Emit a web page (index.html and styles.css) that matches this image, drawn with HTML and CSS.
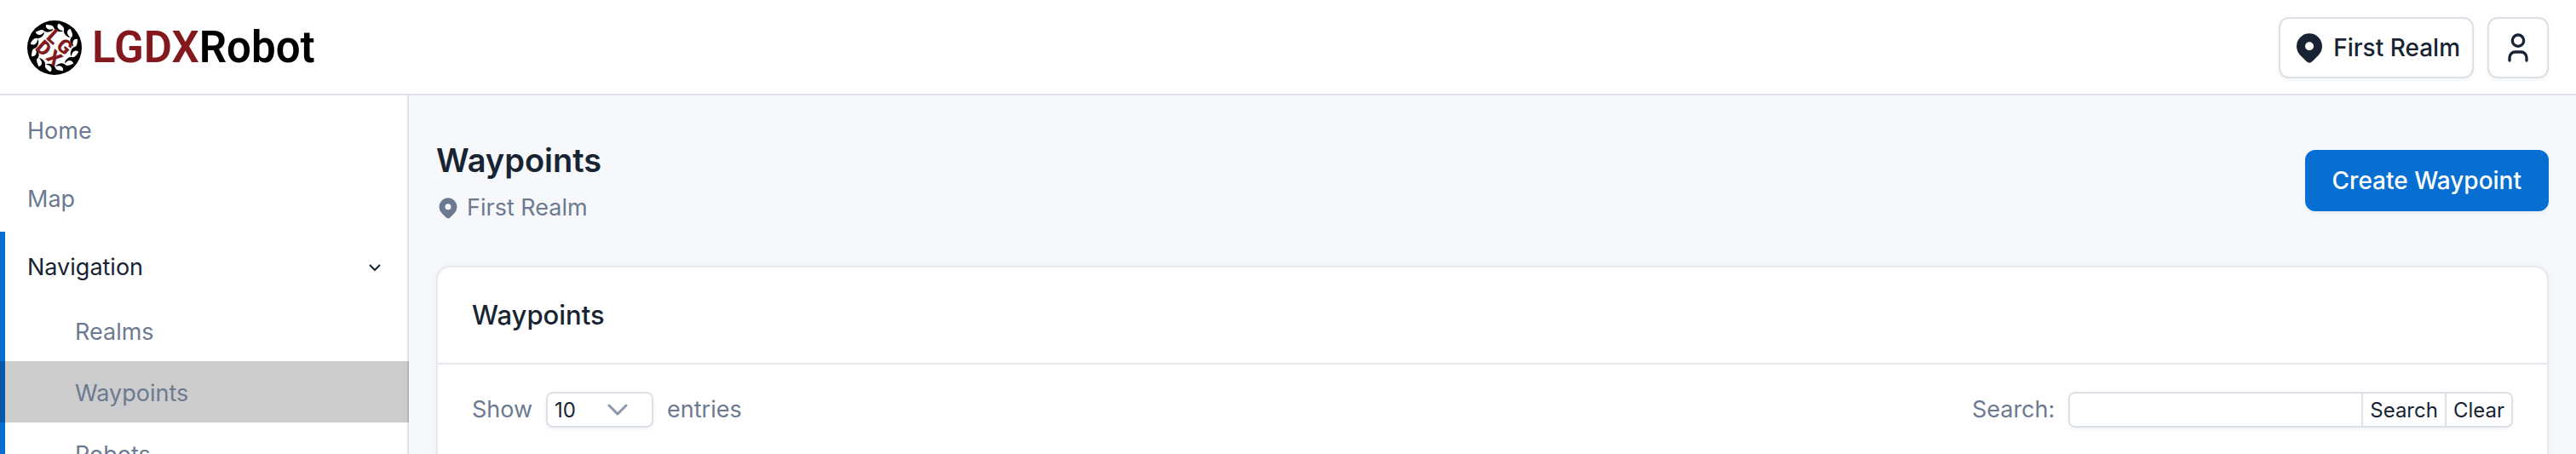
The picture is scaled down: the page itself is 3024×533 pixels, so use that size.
FILE: index.html
```html
<!DOCTYPE html>
<html lang="en">
<head>
  <meta charset="UTF-8">
  <meta name="viewport" content="width=device-width, initial-scale=1.0">
  <title>Waypoints - LGDXRobot</title>
  <link rel="stylesheet" href="styles.css">
</head>
<body>
  <!-- Shared icons -->
  <svg class="sprite" aria-hidden="true">
    <symbol id="icon-pin" viewBox="0 0 24 24">
      <path fill="currentColor" d="M18.364 4.636a9 9 0 0 1 .203 12.519l-.203 .21l-4.243 4.242a3 3 0 0 1 -4.097 .135l-.144 -.135l-4.244 -4.243a9 9 0 0 1 12.728 -12.728zm-6.364 3.364a3 3 0 1 0 0 6a3 3 0 0 0 0 -6z"/>
    </symbol>
    <symbol id="icon-user" viewBox="0 0 24 24">
      <path fill="none" stroke="currentColor" stroke-width="2" stroke-linecap="round" stroke-linejoin="round" d="M8 7a4 4 0 1 0 8 0a4 4 0 0 0 -8 0M6 21v-2a4 4 0 0 1 4 -4h4a4 4 0 0 1 4 4v2"/>
    </symbol>
  </svg>

  <header class="navbar">
    <a class="brand" href="#">
      <svg class="brand-logo" viewBox="0 0 64 64" aria-hidden="true">
        <defs>
          <path id="blade" d="M22 3Q32 -1 39 2Q34 5 36 9Q38 12 42 12Q40 14 37 13Q32 12 31 8Q30 5 22 5Z"/>
        </defs>
        <circle cx="32" cy="32" r="32"/>
        <circle cx="32" cy="32" r="30" fill="#fff"/>
        <use href="#blade"/>
        <use href="#blade" transform="rotate(30 32 32)"/>
        <use href="#blade" transform="rotate(60 32 32)"/>
        <use href="#blade" transform="rotate(90 32 32)"/>
        <use href="#blade" transform="rotate(120 32 32)"/>
        <use href="#blade" transform="rotate(150 32 32)"/>
        <use href="#blade" transform="rotate(180 32 32)"/>
        <use href="#blade" transform="rotate(210 32 32)"/>
        <use href="#blade" transform="rotate(240 32 32)"/>
        <use href="#blade" transform="rotate(270 32 32)"/>
        <use href="#blade" transform="rotate(300 32 32)"/>
        <use href="#blade" transform="rotate(330 32 32)"/>
        <g class="brand-letters" transform="rotate(42 32 32)">
          <text x="23" y="31">L</text>
          <text x="40" y="31">G</text>
          <text x="23" y="49">D</text>
          <text x="40" y="49">X</text>
        </g>
      </svg>
      <span class="brand-name"><span class="brand-red">LGDX</span>Robot</span>
    </a>
    <div class="navbar-actions">
      <button class="btn btn-realm" type="button">
        <svg class="icon"><use href="#icon-pin"/></svg>
        First Realm
      </button>
      <button class="btn btn-icon" type="button" aria-label="User">
        <svg class="icon"><use href="#icon-user"/></svg>
      </button>
    </div>
  </header>

  <div class="page">
    <nav class="sidebar">
      <a class="nav-link" href="#">Home</a>
      <a class="nav-link" href="#">Map</a>
      <div class="nav-group">
        <a class="nav-link active" href="#">
          Navigation
          <svg class="chevron" viewBox="0 0 16 10" aria-hidden="true"><path d="M2 2l6 6l6 -6"/></svg>
        </a>
        <a class="nav-sub" href="#">Realms</a>
        <a class="nav-sub current" href="#">Waypoints</a>
        <a class="nav-sub" href="#">Robots</a>
      </div>
    </nav>

    <main class="content">
      <div class="page-header">
        <div>
          <h1>Waypoints</h1>
          <div class="subtitle">
            <svg class="icon-small"><use href="#icon-pin"/></svg>
            First Realm
          </div>
        </div>
        <button class="btn btn-primary" type="button">Create Waypoint</button>
      </div>

      <section class="card">
        <div class="card-header">
          <h2>Waypoints</h2>
        </div>
        <div class="card-body">
          <div class="entries">
            <label for="pageSize">Show</label>
            <div class="select-wrap">
              <select id="pageSize">
                <option>10</option>
                <option>25</option>
                <option>50</option>
              </select>
              <svg class="select-arrow" viewBox="0 0 24 14" aria-hidden="true"><path d="M2 2l10 10l10 -10"/></svg>
            </div>
            <span>entries</span>
          </div>
          <form class="search">
            <label for="searchInput">Search:</label>
            <div class="input-group">
              <input type="text" id="searchInput">
              <button type="button">Search</button>
              <button type="button">Clear</button>
            </div>
          </form>
        </div>
      </section>
    </main>
  </div>
</body>
</html>
```
FILE: styles.css
```css
* {
  box-sizing: border-box;
}
body {
  margin: 0;
  height: 100vh;
  display: flex;
  flex-direction: column;
  overflow: hidden;
  font-family: Inter, "Liberation Sans", sans-serif;
  font-size: 27px;
  line-height: 40px;
  color: #182433;
  background-color: #f6f8fb;
}
h1, h2 {
  margin: 0;
}
a {
  color: inherit;
  text-decoration: none;
}
button, input, select {
  font-family: inherit;
  color: inherit;
}
.sprite {
  display: none;
}

/* Top bar */
.navbar {
  display: flex;
  flex-shrink: 0;
  align-items: center;
  justify-content: space-between;
  padding: 20px 32px 18px;
  background-color: #fff;
  border-bottom: 2px solid #dce1e7;
}
.brand {
  display: flex;
  align-items: center;
  gap: 12px;
}
.brand-logo {
  width: 64px;
  height: 64px;
}
.brand-letters {
  fill: #83181d;
  font-family: Roboto, sans-serif;
  font-size: 23px;
  font-weight: 900;
  text-anchor: middle;
}
.brand-name {
  font-family: Roboto, sans-serif;
  font-size: 51px;
  font-weight: 600;
  color: #000;
}
.brand-red {
  color: #83181d;
}
.navbar-actions {
  display: flex;
  gap: 16px;
}
.btn {
  display: flex;
  align-items: center;
  justify-content: center;
  height: 72px;
  border: 2px solid #dce1e7;
  border-radius: 12px;
  background-color: #fff;
  font-size: 28px;
  font-weight: 500;
  cursor: pointer;
  box-shadow: 0 2px 4px rgba(24, 36, 51, 0.06);
}
.btn-realm {
  gap: 8px;
  padding: 0 14px;
}
.btn-icon {
  width: 72px;
  padding: 0;
}
.btn-primary {
  padding: 0 30px;
  border-color: #066fd1;
  background-color: #066fd1;
  color: #fff;
}
.icon {
  width: 40px;
  height: 40px;
}

/* Side menu */
.page {
  display: flex;
  flex: 1;
  min-height: 0;
}
.sidebar {
  width: 480px;
  flex-shrink: 0;
  overflow: hidden;
  background-color: #fff;
  box-shadow: inset -2px 0 #dce1e7;
  color: #6c7a91;
}
.nav-link {
  display: flex;
  align-items: center;
  justify-content: space-between;
  padding: 22px 32px 18px;
}
.nav-group {
  border-left: 6px solid #066fd1;
}
.nav-group .nav-link {
  padding-left: 26px;
}
.active {
  color: #182433;
}
.nav-sub {
  display: block;
  margin-left: -6px;
  padding: 18px 32px 14px 88px;
}
.current {
  background-color: rgba(0, 0, 0, 0.2);
}
.chevron {
  width: 16px;
  height: 10px;
  fill: none;
  stroke: currentColor;
  stroke-width: 2;
}

/* Main area */
.content {
  flex: 1;
  overflow: hidden;
  padding: 48px 32px;
}
.page-header {
  display: flex;
  align-items: center;
  justify-content: space-between;
  margin-bottom: 48px;
}
h1 {
  font-size: 38px;
  font-weight: 600;
  line-height: 56px;
}
.subtitle {
  display: flex;
  align-items: center;
  gap: 8px;
  margin-top: 8px;
  color: #6c7a91;
}
.icon-small {
  width: 28px;
  height: 28px;
}
.card {
  border: 2px solid #e6e8ed;
  border-radius: 16px;
  background-color: #fff;
  box-shadow: 0 0 8px rgba(24, 36, 51, 0.04);
}
.card-header {
  padding: 36px 40px;
  border-bottom: 2px solid #e6e8ed;
}
h2 {
  font-size: 31px;
  font-weight: 500;
  line-height: 40px;
}
.card-body {
  display: flex;
  align-items: flex-start;
  justify-content: space-between;
  min-height: 320px;
  padding: 32px 40px;
  color: #6c7a91;
}
.entries, .search {
  display: flex;
  align-items: center;
  gap: 16px;
}
.select-wrap {
  position: relative;
}
select {
  appearance: none;
  display: block;
  width: 126px;
  height: 42px;
  padding: 0 8px;
  border: 2px solid #dce1e7;
  border-radius: 8px;
  background-color: #fff;
  color: #182433;
  font-size: 24px;
  box-shadow: 0 2px 4px rgba(24, 36, 51, 0.06);
}
.select-arrow {
  position: absolute;
  top: 14px;
  right: 30px;
  width: 24px;
  height: 14px;
  fill: none;
  stroke: #8a97ad;
  stroke-width: 3;
  stroke-linecap: round;
  stroke-linejoin: round;
  pointer-events: none;
}
.input-group {
  display: flex;
  height: 42px;
  border: 2px solid #dce1e7;
  border-radius: 8px;
  overflow: hidden;
  color: #182433;
  box-shadow: 0 2px 4px rgba(24, 36, 51, 0.06);
}
.input-group input {
  width: 342px;
  padding: 0 8px;
  border: 0;
  font-size: 24px;
}
.input-group button {
  padding: 0 8px;
  border: 0;
  border-left: 2px solid #dce1e7;
  background-color: #fff;
  font-size: 24px;
  cursor: pointer;
}
```
